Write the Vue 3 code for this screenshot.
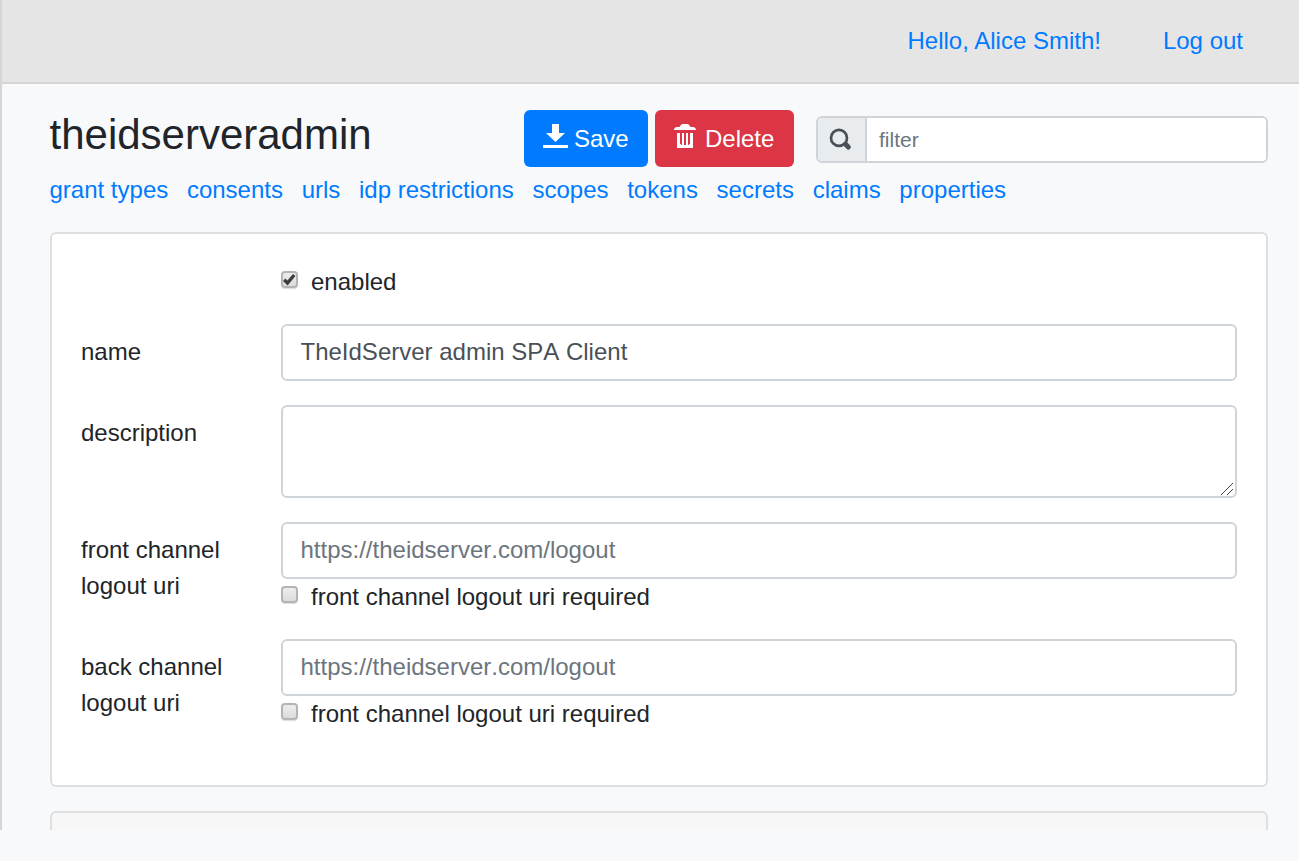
<script setup>
import { ref } from 'vue'

const links = ['grant types', 'consents', 'urls', 'idp restrictions', 'scopes', 'tokens', 'secrets', 'claims', 'properties']
const name = ref('TheIdServer admin SPA Client')
const description = ref('')
const channels = [
  { id: 'front', label: 'front channel logout uri' },
  { id: 'back', label: 'back channel logout uri' },
]
</script>

<template>
  <div class="page">
    <header class="topbar">
      <a>Hello, Alice Smith!</a>
      <a>Log out</a>
    </header>
    <main class="content">
      <div class="heading">
        <h3>theidserveradmin</h3>
        <div class="actions">
          <button class="btn save">
            <svg width="25" height="25" viewBox="0 0 25 25"><path d="M9 0h7v9h6l-9.500 9L3 9h6zM0 21h25v3H0z" fill="#fff" /></svg>
            <span>Save</span>
          </button>
          <button class="btn delete">
            <svg width="22" height="25" viewBox="0 0 22 25">
              <path d="M0 6C0 4 1.500 3 3 3H5.500Q7 0 8.500 0H13.500Q15 0 16.500 3H19C20.500 3 22 4 22 6Z" fill="#fff" />
              <path d="M3 9H6V19.500L7.500 21H8V9H10V21H12V9H14V21H14.500L16 19.500V9H19V24H3Z" fill="#fff" />
            </svg>
            <span>Delete</span>
          </button>
        </div>
        <div class="filter">
          <span class="addon">
            <svg width="23" height="23" viewBox="0 0 23 23" fill="none" stroke="#495057">
              <circle cx="10" cy="9.900" r="8" stroke-width="2.700" />
              <path d="M16.500 16.300L19.300 19" stroke-width="5" stroke-linecap="round" />
            </svg>
          </span>
          <input placeholder="filter" />
        </div>
      </div>
      <nav><a v-for="l in links" :key="l">{{ l }}</a></nav>
      <section class="card">
        <div class="row">
          <span class="label"></span>
          <label class="check"><input type="checkbox" checked />
            <svg class="mark" width="17" height="18" viewBox="0 0 17 18"><path d="M3.200 8.800L6.500 12L13.200 4" fill="none" stroke="#3b3b3b" stroke-width="3.300" /></svg>
            <span>enabled</span></label>
        </div>
        <div class="row">
          <label class="label">name</label>
          <div class="field"><input v-model="name" class="control" /></div>
        </div>
        <div class="row">
          <label class="label">description</label>
          <div class="field"><textarea v-model="description" class="control area"></textarea>
            <svg class="grip" width="13" height="13" viewBox="0 0 13 13" shape-rendering="crispEdges"><path d="M.5 12.500L12.500 .5M6.500 12.500L12.500 6.500" stroke="#444" /></svg>
          </div>
        </div>
        <div v-for="c in channels" :key="c.id" class="row">
          <label class="label">{{ c.label }}</label>
          <div class="field">
            <input class="control" placeholder="https://theidserver.com/logout" />
            <label class="check"><input type="checkbox" /><span>front channel logout uri required</span></label>
          </div>
        </div>
      </section>
      <section class="card next"></section>
    </main>
  </div>
</template>

<style>
body { background: #f8f9fb; overflow: hidden; }
</style>

<style scoped>
* { box-sizing: border-box; }
.page {
  height: 830px; overflow: hidden; border-left: 2px solid #d6d6d8;
  font: 24px/36px "Liberation Sans", Arial, sans-serif; color: #212529;
}
.topbar {
  height: 84px; background: #e5e5e5; border-bottom: 2px solid #d6d5d5;
  display: flex; justify-content: flex-end; align-items: center; gap: 62px; padding-right: 56px;
}
a { color: #007bff; }
.content { padding: 26px 31px 0 48px; }
.heading { display: flex; height: 57px; }
h3 { margin: 0 0 0 -.5px; width: 474.5px; font-size: 42px; line-height: 50px; font-weight: 400; }
.actions { display: flex; gap: 7px; width: 292px; }
.btn {
  height: 57px; border: 0; border-radius: 6px; color: #fff; font: inherit;
  display: flex; align-items: flex-start; padding: 11px 0 0 19px;
}
.btn svg { display: block; margin-top: 3px; }
.save { width: 124px; background: #007bff; }
.save span { margin-left: 6px; }
.delete { width: 139px; background: #dc3545; }
.delete span { margin-left: 9px; }
.filter {
  flex: 1; height: 47px; margin-top: 6px; display: flex; background: #fff;
  border: 2px solid #ced4da; border-radius: 6px; overflow: hidden;
}
.addon {
  width: 49px; background: #e9ecef; border-right: 2px solid #ced4da;
  display: flex; padding: 10px 0 0 11px;
}
.filter input {
  flex: 1; border: 0; padding: 0 12px; background: #fff; outline: 0;
  font: 21px/32px "Liberation Sans", Arial, sans-serif;
}
input::placeholder { color: #6c757d; opacity: 1; }
nav { display: flex; gap: 18.700px; margin: 5px 0 0 -.5px; height: 36px; white-space: nowrap; }
.card {
  margin-top: 24px; height: 555px; padding: 30px 29px; background: #fff;
  border: 2px solid #dedfe0; border-radius: 6px;
}
.next { background: #f7f7f7; }
.row { display: flex; margin-bottom: 24px; }
.label { width: 200px; padding: 10px 30px 0 0; flex: none; }
.field { flex: 1; position: relative; }
.control {
  display: block; width: 100%; height: 57px; margin: 0; padding: 0 18px 2px 17.5px; outline: 0;
  border: 2px solid #ced4da; border-radius: 6px; background: #fff; color: #495057;
  font: inherit; font-kerning: none;
}
.area { height: 93px; resize: none; }
.grip { position: absolute; right: 4px; bottom: 2px; }
.check { display: flex; height: 36px; position: relative; }
.row > .label:empty { padding: 0; }
.check input {
  appearance: none; width: 17px; height: 17px; margin: 7px 13px 0 0; flex: none;
  border: 2px solid #b4b4b4; border-radius: 4px;
  background: linear-gradient(#ededed, #dcdcdc); box-shadow: 0 1px 1px #ddd;
}
.mark { position: absolute; left: 0; top: 7px; }
</style>
